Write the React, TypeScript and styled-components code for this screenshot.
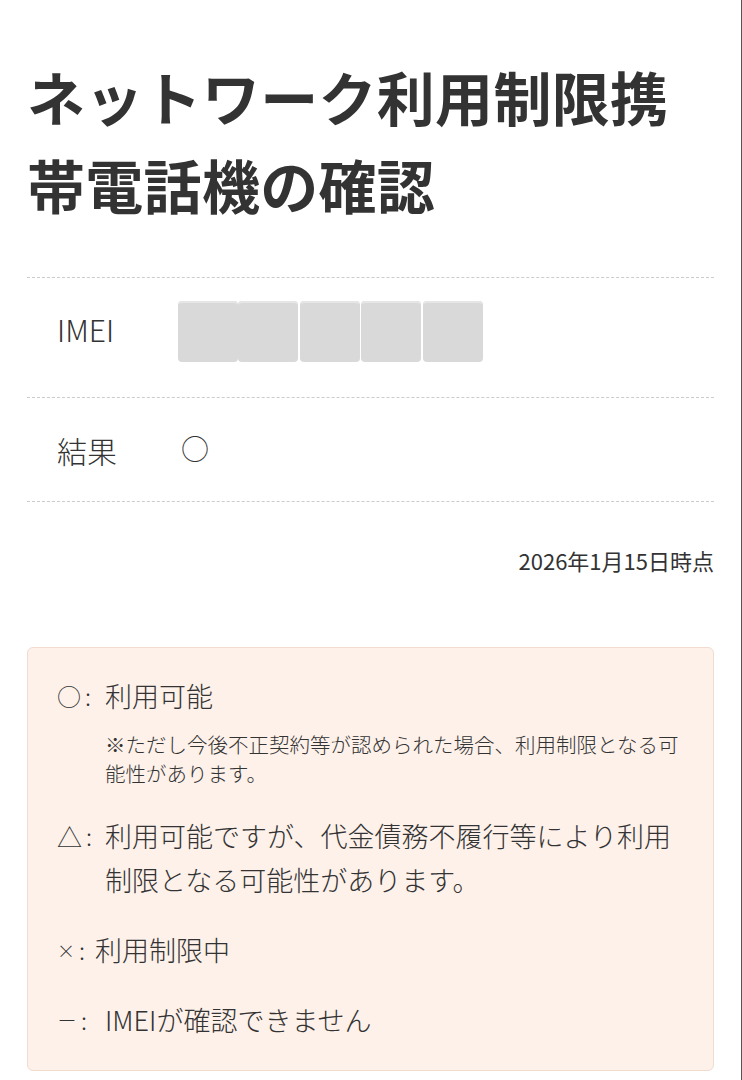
import React from "react";
import styled, { createGlobalStyle } from "styled-components";

const GlobalStyle = createGlobalStyle`
  html, body {
    margin: 0;
    padding: 0;
    background: #ffffff;
  }
  body {
    font-family: "Noto Sans CJK JP", "Noto Sans", sans-serif;
    color: #333333;
  }
`;

const Page = styled.div`
  width: 742px;
  min-height: 1080px;
  box-sizing: border-box;
  padding: 52px 27px 6px 27px;
  border-right: 1px solid #555555;
`;

const Title = styled.h1`
  margin: 0 0 49px 0;
  font-size: 58px;
  font-weight: 700;
  line-height: 88px;
  color: #333333;
  letter-spacing: 0.3px;
`;

const Table = styled.div`
  display: flex;
  flex-direction: column;
`;

const Divider = styled.div`
  height: 0;
  border-top: 1px dashed #cccccc;
`;

const Row = styled.div<{ h: number; lift?: number }>`
  display: flex;
  align-items: center;
  box-sizing: border-box;
  height: ${(p) => p.h}px;
  padding-left: 30px;
  padding-bottom: ${(p) => p.lift ?? 0}px;
`;

const Label = styled.div`
  width: 121px;
  font-size: 30px;
  font-weight: 300;
  color: #333333;
`;

const Value = styled.div`
  font-size: 28px;
  font-weight: 300;
  color: #333333;
  margin-left: 3px;
  margin-top: -4px;
`;

const Mask = styled.div`
  display: flex;
  margin-top: 6px;
`;

const MaskBlock = styled.div<{ shift: number }>`
  width: 60px;
  height: 61px;
  margin-left: ${(p) => p.shift}px;
  background: #d9d9d9;
  border-radius: 4px;
  box-shadow: inset 0 4px 0 -2px #e6e6e6;
`;

const Stamp = styled.div`
  margin: 43px 0 72px 0;
  text-align: right;
  font-size: 22px;
  line-height: 30px;
  color: #333333;
`;

const Legend = styled.div`
  background: #fdf1ea;
  border: 1px solid #f2dccf;
  border-radius: 6px;
  padding: 26px 28px 28px 29px;
  display: flex;
  flex-direction: column;
  gap: 26px;
`;

const Item = styled.div`
  display: flex;
  font-size: 27px;
  line-height: 44px;
  font-weight: 300;
  color: #333333;
`;

const Mark = styled.span<{ w: number }>`
  flex-shrink: 0;
  display: flex;
  width: ${(p) => p.w}px;
`;

const Sym = styled.span<{ size: number }>`
  font-size: ${(p) => p.size}px;
`;

const Colon = styled.span`
  margin-left: 4px;
  font-size: 24px;
`;

const Body = styled.div`
  flex: 1;
`;

const Note = styled.div`
  margin-top: 12px;
  font-size: 20.5px;
  line-height: 29px;
  color: #333333;
`;

const legend = [
  { sym: "○", size: 24, w: 48, text: "利用可能", note: "※ただし今後不正契約等が認められた場合、利用制限となる可能性があります。" },
  { sym: "△", size: 25, w: 48, text: "利用可能ですが、代金債務不履行等により利用制限となる可能性があります。" },
  { sym: "×", size: 18, w: 38, text: "利用制限中" },
  { sym: "－", size: 20, w: 48, text: "IMEIが確認できません" },
];

export default function App() {
  const shifts = [0, 0, 2, 1, 2];
  return (
    <>
      <GlobalStyle />
      <Page>
        <Title>ネットワーク利用制限携帯電話機の確認</Title>
        <Table>
          <Divider />
          <Row h={119} lift={18}>
            <Label>IMEI</Label>
            <Mask>
              {shifts.map((s, i) => (
                <MaskBlock key={i} shift={s} />
              ))}
            </Mask>
          </Row>
          <Divider />
          <Row h={103}>
            <Label>結果</Label>
            <Value>○</Value>
          </Row>
          <Divider />
        </Table>
        <Stamp>2026年1月15日時点</Stamp>
        <Legend>
          {legend.map((l) => (
            <Item key={l.sym}>
              <Mark w={l.w}>
                <Sym size={l.size}>{l.sym}</Sym>
                <Colon>:</Colon>
              </Mark>
              <Body>
                {l.text}
                {l.note && <Note>{l.note}</Note>}
              </Body>
            </Item>
          ))}
        </Legend>
      </Page>
    </>
  );
}
